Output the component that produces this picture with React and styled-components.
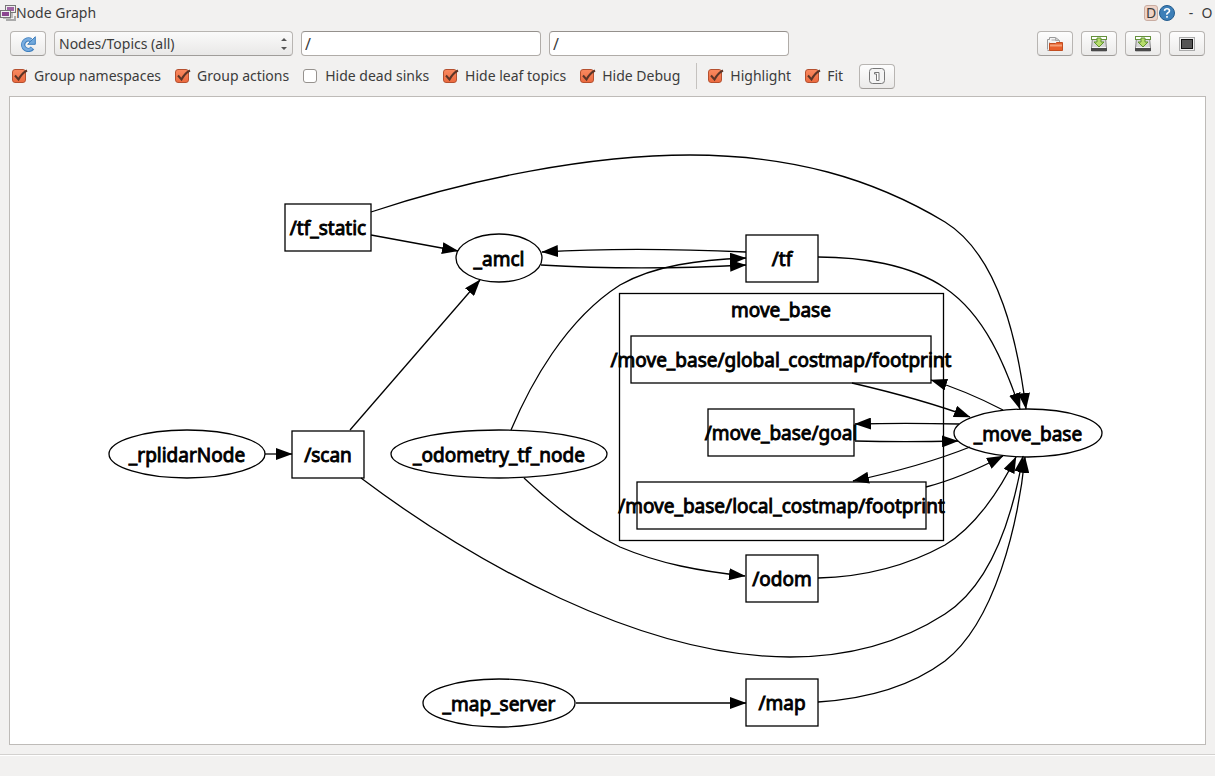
import React from "react";
import styled, { createGlobalStyle } from "styled-components";

const GlobalStyle = createGlobalStyle`
  * {
    box-sizing: border-box;
  }

  body {
    margin: 0;
    background: #f2f1f0;
    color: #3c3c3c;
    font-family: "Noto Sans", "Open Sans", sans-serif;
    font-size: 14px;
    line-height: 20px;
  }

  button,
  input,
  select {
    font: inherit;
    color: inherit;
  }
`;

const Window = styled.div`
  display: flex;
  flex-direction: column;
  min-height: 100vh;
`;

const TitleBar = styled.header`
  display: flex;
  align-items: center;
  height: 26px;
  padding-right: 1px;
`;

const Title = styled.h1`
  flex: 1;
  margin: 0;
  font-size: 14px;
  font-weight: 400;
`;

const TitleButton = styled.button`
  display: flex;
  align-items: center;
  justify-content: center;
  min-width: ${props => (props.$wide ? "16px" : "14px")};
  height: 16px;
  margin-left: ${props => (props.$wide ? "8px" : "1px")};
  padding: 0;
  border: ${props => (props.$boxed ? "1px solid #c9ada2" : "0")};
  border-radius: 3px;
  background: ${props => (props.$boxed ? "#efd3c7" : "none")};
  line-height: 16px;
`;

const Toolbar = styled.div`
  display: flex;
  align-items: center;
  gap: 8px;
  padding: 5px 10px 0;
`;

const Options = styled.div`
  display: flex;
  align-items: center;
  gap: 14px;
  padding: 7px 12px;
`;

const Spacer = styled.div`
  flex: 1;
`;

const ToolButton = styled.button`
  display: flex;
  align-items: center;
  justify-content: center;
  flex: none;
  width: 36px;
  height: 25px;
  padding: 0;
  border: 1px solid #b8b5b2;
  border-bottom-color: #a09d9a;
  border-radius: 4px;
  background: linear-gradient(#fdfdfd, #ebeae9);
`;

const FitButton = styled(ToolButton)`
  margin-left: 2px;
`;

const SelectBox = styled.div`
  display: grid;
  flex: 0 1 239px;
  align-items: center;

  > * {
    grid-area: 1 / 1;
  }

  > svg {
    justify-self: end;
    margin-right: 6px;
    pointer-events: none;
  }
`;

const Select = styled.select`
  appearance: none;
  width: 100%;
  height: 25px;
  padding: 0 20px 0 4px;
  border: 1px solid #b8b5b2;
  border-bottom-color: #a09d9a;
  border-radius: 4px;
  background: linear-gradient(#fafafa, #e9e8e7);
`;

const TextField = styled.input`
  flex: 0 1 240px;
  min-width: 0;
  height: 25px;
  padding: 0 3px;
  border: 1px solid #b0aca8;
  border-top-color: #94908c;
  border-radius: 4px;
  background: #fff;
  font-size: 16px;
`;

const CheckLabel = styled.label`
  display: flex;
  align-items: center;
  gap: 8px;
  white-space: nowrap;
`;

const CheckBox = styled.span`
  display: grid;

  > * {
    grid-area: 1 / 1;
  }

  > svg {
    overflow: visible;
    pointer-events: none;
  }
`;

const CheckInput = styled.input`
  appearance: none;
  width: 14px;
  height: 14px;
  margin: 0;
  border: 1px solid #96928e;
  border-radius: 3px;
  background: #fff;

  &:checked {
    border-color: #b5502f;
    background: linear-gradient(#f9895f, #ec6b40);
  }

  & + svg {
    visibility: hidden;
  }

  &:checked + svg {
    visibility: visible;
  }
`;

const Separator = styled.div`
  width: 1px;
  height: 26px;
  margin-right: -3px;
  margin-left: 2px;
  background: #c5c2bf;
`;

const Canvas = styled.main`
  display: flex;
  flex: 1;
  margin: 0 9px;
  border: 1px solid #bebbb8;
  background: #fff;
`;

const Graph = styled.svg`
  flex: 1;
  min-width: 0;
  font-family: "Noto Sans", "Open Sans", sans-serif;
  font-size: 19px;
`;

const Shape = styled.g`
  fill: none;
  stroke: #000;
  stroke-width: 1.3;
`;

const NodeText = styled.text`
  fill: #000;
  stroke: #000;
  stroke-width: 0.9;
  text-anchor: middle;
`;

const StatusBar = styled.footer`
  height: 22px;
  margin-top: 9px;
  border-top: 1px solid #d3d1cf;
  box-shadow: inset 0 1px #fff;
`;

const boxes = [
  { label: "/tf_static", x: 285, y: 204, w: 86, h: 47 },
  { label: "/tf", x: 746, y: 235, w: 72, h: 47 },
  { label: "/move_base/global_costmap/footprint", x: 631, y: 336, w: 300, h: 47 },
  { label: "/move_base/goal", x: 708, y: 409, w: 146, h: 47 },
  { label: "/move_base/local_costmap/footprint", x: 637, y: 482, w: 289, h: 47 },
  { label: "/scan", x: 292, y: 431, w: 72, h: 47 },
  { label: "/odom", x: 746, y: 555, w: 72, h: 47 },
  { label: "/map", x: 746, y: 679, w: 72, h: 47 }
];

const ellipses = [
  { label: "_amcl", x: 499, y: 258, rx: 43 },
  { label: "_rplidarNode", x: 187, y: 454, rx: 78 },
  { label: "_odometry_tf_node", x: 499, y: 454, rx: 108 },
  { label: "_map_server", x: 499, y: 703, rx: 76 },
  { label: "_move_base", x: 1028, y: 433, rx: 74 }
];

const edges = [
  "M371 212C470 179 590 155 690 155C790 155 872 178 945 222C1000 256 1018 345 1026 409",
  "M371 235L458 251",
  "M746 252C680 249 610 248 542 252",
  "M541 265C610 269 690 268 746 265",
  "M511 430C530 385 565 320 620 285C655 265 700 260 746 258",
  "M524 478C545 498 580 528 620 547C660 564 700 571 745 576",
  "M350 430L480 280",
  "M265 454L292 454",
  "M361 478C470 560 640 657 790 657C850 657 900 643 945 614C990 585 1012 520 1023 456",
  "M818 257C860 257 910 264 945 288C985 315 1005 365 1020 409",
  "M818 578C860 577 905 567 945 545C975 527 1000 490 1016 457",
  "M818 702C865 699 910 687 945 661C995 622 1018 525 1025 457",
  "M576 703L746 703",
  "M852 383C895 393 935 404 970 417",
  "M1003 410C980 398 957 388 931 380",
  "M959 424C920 423 890 423 855 424",
  "M855 441C890 442 920 442 958 441",
  "M970 447C935 461 895 472 853 481",
  "M926 487C957 479 980 468 1003 456"
];

const Check = ({ label, checked }) => (
  <CheckLabel>
    <CheckBox>
      <CheckInput type="checkbox" defaultChecked={checked} />
      <svg width="14" height="14" fill="none" stroke="#5c3527" strokeWidth="2">
        <path d="M3 6.500L6.500 10.500Q9.500 4.500 15 1.500" />
      </svg>
    </CheckBox>
    {label}
  </CheckLabel>
);

const GraphIcon = () => (
  <svg width="16" height="16" viewBox="0 0 16 16">
    <path d="M3 8v5h8M12 7v6" fill="none" stroke="#888" />
    <rect x="5.500" y="0.500" width="10" height="7" fill="#eee" stroke="#777" />
    <rect x="7" y="2" width="7" height="4" fill="#a064a4" />
    <rect x="0.500" y="5.500" width="10" height="7" fill="#eee" stroke="#777" />
    <rect x="2" y="7" width="7" height="4" fill="#8b4590" />
    <path d="M6 15h9v-4" fill="none" stroke="#aaa" strokeWidth="2" />
  </svg>
);

const HelpIcon = () => (
  <svg width="16" height="16" viewBox="0 0 16 16">
    <circle cx="8" cy="8" r="7.500" fill="#3d7fb8" stroke="#245c8e" />
    <path
      d="M5.500 5.800Q5.700 3.700 8 3.700T10.500 5.800Q10.500 7 9 7.800T8 9.800M8 11v1.800"
      fill="none"
      stroke="#fff"
      strokeWidth="1.600"
    />
  </svg>
);

const RefreshIcon = () => (
  <svg width="16" height="16" viewBox="0 0 16 16">
    <path d="M11 4.200A5.200 5.200 0 1 0 12.500 12" fill="none" stroke="#3f7fbd" strokeWidth="4.400" />
    <path d="M15.300 0.700v7.600H7.700z" fill="#72a9dc" stroke="#3f7fbd" />
    <path d="M11 4.200A5.200 5.200 0 1 0 12 12.200" fill="none" stroke="#78ace0" strokeWidth="2.600" />
  </svg>
);

const OpenIcon = () => (
  <svg width="18" height="16" viewBox="0 0 18 16">
    <path d="M1.500 13.500v-10h2v-2h6l4 3v3" fill="#f4f4f4" stroke="#999" />
    <path d="M5.500 4h6M9.500 1.500v3h4" fill="none" stroke="#aaa" />
    <path d="M1.500 14.500h2v-8" fill="none" stroke="#999" />
    <path d="M3.500 7.500h6l1-1h6v8h-13z" fill="#e8602c" stroke="#c24d20" />
    <path d="M4 8.500h12v2H4z" fill="#f5a077" />
  </svg>
);

const SaveIcon = () => (
  <svg width="18" height="18" viewBox="0 0 18 18">
    <path d="M2.500 2.500h13l1 11v2.500h-15v-2.500z" fill="#d6d6d6" stroke="#888" />
    <path d="M1 13h16v3H1z" fill="#4a4a4a" />
    <path d="M2 12.500h14" stroke="#f4f4f4" />
    <rect x="1.500" y="1.500" width="15" height="3" fill="#fff" stroke="#65913c" />
    <path d="M7 3h4v4h3l-5 5-5-5h3z" fill="#b7dc6c" stroke="#5e942e" />
  </svg>
);

const ScreenIcon = () => (
  <svg width="16" height="14" viewBox="0 0 16 14">
    <rect x="0.500" y="0.500" width="15" height="13" fill="#eee" stroke="#aaa" />
    <rect x="2.500" y="2.500" width="11" height="9" fill="#555" stroke="#111" />
  </svg>
);

const ZoomIcon = () => (
  <svg width="16" height="16" viewBox="0 0 16 16">
    <rect x="0.500" y="0.500" width="15" height="15" rx="3" fill="#f4f4f4" stroke="#777" />
    <path d="M5.500 6V4.500h4.500v8H7.500V6z" fill="#fff" stroke="#777" />
  </svg>
);

const NodeGraph = () => (
  <Graph viewBox="10 97 1195 647" role="img" aria-label="Node Graph">
    <defs>
      <marker
        id="arrow"
        markerUnits="userSpaceOnUse"
        markerWidth="17"
        markerHeight="12"
        refX="16"
        refY="6"
        orient="auto"
      >
        <path d="M0 0L16.500 6L0 12z" />
      </marker>
    </defs>
    <Shape>
      <rect x="619.500" y="293.500" width="324" height="247" />
      {boxes.map(({ label, x, y, w, h }) => (
        <rect key={label} x={x} y={y} width={w} height={h} />
      ))}
      {ellipses.map(({ label, x, y, rx }) => (
        <ellipse key={label} cx={x} cy={y} rx={rx} ry="24" />
      ))}
      {edges.map(d => (
        <path key={d} d={d} markerEnd="url(#arrow)" />
      ))}
    </Shape>
    <NodeText x="781" y="317">
      move_base
    </NodeText>
    {boxes.map(({ label, x, y, w }) => (
      <NodeText key={label} x={x + w / 2} y={y + 31}>
        {label}
      </NodeText>
    ))}
    {ellipses.map(({ label, x, y }) => (
      <NodeText key={label} x={x} y={y + 8}>
        {label}
      </NodeText>
    ))}
  </Graph>
);

const App = () => (
  <Window>
    <GlobalStyle />
    <TitleBar>
      <GraphIcon />
      <Title>Node Graph</Title>
      <TitleButton $boxed>D</TitleButton>
      <TitleButton aria-label="Help">
        <HelpIcon />
      </TitleButton>
      <TitleButton $wide>-</TitleButton>
      <TitleButton>O</TitleButton>
    </TitleBar>
    <Toolbar>
      <ToolButton aria-label="Refresh">
        <RefreshIcon />
      </ToolButton>
      <SelectBox>
        <Select aria-label="Graph type">
          <option>Nodes/Topics (all)</option>
        </Select>
        <svg width="6" height="14" fill="#555">
          <path d="M0 4L3 1L6 4zM0 10L3 13L6 10z" />
        </svg>
      </SelectBox>
      <TextField aria-label="Node filter" defaultValue="/" />
      <TextField aria-label="Topic filter" defaultValue="/" />
      <Spacer />
      <ToolButton aria-label="Open">
        <OpenIcon />
      </ToolButton>
      <ToolButton aria-label="Save as DOT">
        <SaveIcon />
      </ToolButton>
      <ToolButton aria-label="Save as SVG">
        <SaveIcon />
      </ToolButton>
      <ToolButton aria-label="Save as image">
        <ScreenIcon />
      </ToolButton>
    </Toolbar>
    <Options>
      <Check label="Group namespaces" checked />
      <Check label="Group actions" checked />
      <Check label="Hide dead sinks" />
      <Check label="Hide leaf topics" checked />
      <Check label="Hide Debug" checked />
      <Separator />
      <Check label="Highlight" checked />
      <Check label="Fit" checked />
      <FitButton aria-label="Fit in view">
        <ZoomIcon />
      </FitButton>
    </Options>
    <Canvas>
      <NodeGraph />
    </Canvas>
    <StatusBar />
  </Window>
);

export default App;
